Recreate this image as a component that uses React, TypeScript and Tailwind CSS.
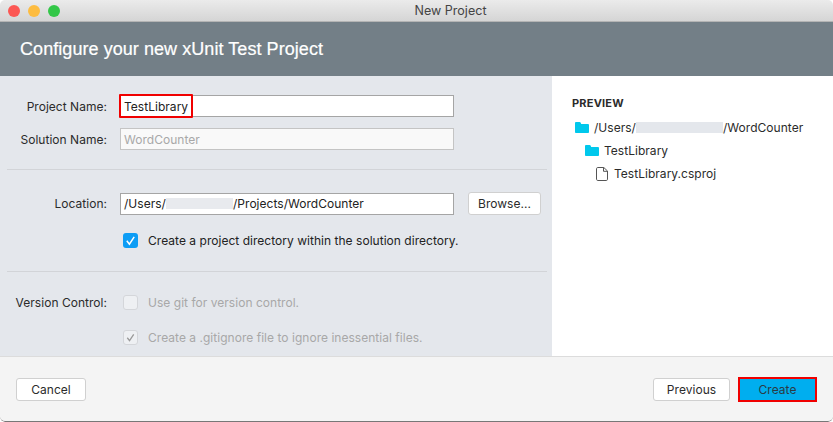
import type { ReactNode } from "react";

function FolderIcon() {
  return (
    <svg width="14" height="11" viewBox="0 0 14 11" className="shrink-0">
      <path d="M0 1.100C0 .5.5 0 1.100 0h3.500c.5 0 .8.200 1 .6L6.200 2h6.700c.6 0 1.100.5 1.100 1.100v6.800c0 .6-.5 1.100-1.100 1.100H1.100C.5 11 0 10.500 0 9.900z" fill="#00c8ec" />
    </svg>
  );
}

function FileIcon() {
  return (
    <svg width="12" height="14" viewBox="0 0 12 14" className="shrink-0">
      <path d="M1.800.5h6L11.500 4v8.300c0 .7-.5 1.200-1.200 1.200H1.800c-.7 0-1.300-.5-1.300-1.200V1.700C.5 1 1.100.5 1.800.5z" fill="white" stroke="#555" />
      <path d="M7.500.5v3.800h4" fill="none" stroke="#555" />
    </svg>
  );
}

function Check({ color }: { color: string }) {
  return (
    <svg width="15" height="15" viewBox="0 0 15 15">
      <path d="M3.800 7.800l2.600 3.400 4.800-7.400" fill="none" stroke={color} strokeWidth="1.500" />
    </svg>
  );
}

function Row({ label, children }: { label: string; children: ReactNode }) {
  return (
    <div className="flex items-center">
      <div className="w-[107px] shrink-0 text-right text-[#2b2b2b]">{label}</div>
      <div className="ml-[13px] flex min-w-0 flex-1 items-center">{children}</div>
    </div>
  );
}

function Button({ children, className }: { children: ReactNode; className: string }) {
  return (
    <button className={`h-[23px] rounded-[3px] border border-[#d0d0d0] bg-white text-[#2b2b2b] ${className}`}>
      {children}
    </button>
  );
}

export default function App() {
  return (
    <div className="flex h-[422px] w-[833px] flex-col overflow-hidden rounded-[5px] bg-white font-['Inter',sans-serif] text-[12px] leading-[15px] tracking-[0.03px]">
      {/* Title bar */}
      <div className="relative flex h-[22px] shrink-0 items-center justify-center border-b border-[#b4b4b4] bg-gradient-to-b from-[#ebebeb] to-[#d5d5d5] pl-[68px] text-[12.5px] text-[#444]">
        <div className="absolute top-[5px] left-[8px] flex gap-[8px]">
          <span className="h-[12px] w-[12px] rounded-full bg-[#fc5753]" />
          <span className="h-[12px] w-[12px] rounded-full bg-[#fdbc40]" />
          <span className="h-[12px] w-[12px] rounded-full bg-[#33c748]" />
        </div>
        New Project
      </div>

      {/* Header */}
      <div className="flex h-[54px] shrink-0 items-center bg-[#737f87] pl-[20px] font-['Liberation_Sans',sans-serif] text-[18px] tracking-[0.06px] text-white [-webkit-text-stroke:0.2px_white]">
        Configure your new xUnit Test Project
      </div>

      <div className="flex min-h-0 flex-1">
        {/* Form */}
        <div className="flex w-[552px] shrink-0 flex-col bg-[#e4e7ec] pt-[19px]">
          <div className="flex w-[454px] flex-col gap-[11px]">
            <Row label="Project Name:">
              <div className="relative flex h-[22px] w-full items-center border border-[#a5a5a5] bg-white pl-[3px] text-[#222]">
                TestLibrary
                <div className="absolute top-[-2px] left-[-2px] h-[24px] w-[74px] rounded-[1px] border-2 border-[#f00000]" />
              </div>
            </Row>
            <Row label="Solution Name:">
              <div className="flex h-[22px] w-full items-center border border-[#c4c4c4] bg-[#f9f9f9] pt-px pl-[3px] text-[#a8a8a8]">
                WordCounter
              </div>
            </Row>
          </div>

          <div className="mx-[7px] mt-[19px] h-px w-[540px] bg-[#d2d4d8]" />

          <div className="mt-[22px] flex items-center">
            <div className="w-[454px] shrink-0">
              <Row label="Location:">
                <div className="flex h-[22px] w-full items-center border border-[#a5a5a5] bg-white pl-[3px] text-[#222]">
                  /Users/
                  <span className="h-[11px] w-[67px] bg-[#e8eaee]" />
                  /Projects/WordCounter
                </div>
              </Row>
            </div>
            <Button className="ml-[14px] w-[73px]">Browse...</Button>
          </div>

          <div className="mt-[18px] ml-[123px] flex items-center gap-[10px] text-[#222]">
            <span className="flex h-[15px] w-[15px] items-center justify-center rounded-[3px] bg-[#0d9df5]">
              <Check color="white" />
            </span>
            Create a project directory within the solution directory.
          </div>

          <div className="mx-[7px] mt-[23px] h-px w-[540px] bg-[#d2d4d8]" />

          <div className="mt-[23px]">
            <Row label="Version Control:">
              <div className="ml-[3px] flex items-center gap-[10px] text-[#a8a8a8]">
                <span className="h-[15px] w-[15px] rounded-[3px] border border-[#d4d6da] bg-[#eef0f3]" />
                Use git for version control.
              </div>
            </Row>
          </div>

          <div className="mt-[20px] ml-[123px] flex items-center gap-[10px] text-[#a8a8a8]">
            <span className="flex h-[15px] w-[15px] items-center justify-center rounded-[3px] border border-[#d4d6da] bg-[#eef0f3]">
              <Check color="#9a9a9a" />
            </span>
            Create a .gitignore file to ignore inessential files.
          </div>
        </div>

        {/* Preview */}
        <div className="flex-1 bg-white pt-[20px] pl-[20px] text-[#2b2b2b]">
          <div className="text-[11px] font-bold tracking-[0.2px]">PREVIEW</div>
          <div className="mt-[9px] flex flex-col gap-[8px]">
            <div className="ml-[3px] flex h-[15px] items-center gap-[5px]">
              <FolderIcon />
              <span className="flex items-center">
                /Users/
                <span className="h-[11px] w-[87px] bg-[#e4e7ec]" />
                /WordCounter
              </span>
            </div>
            <div className="ml-[13px] flex h-[15px] items-center gap-[5px]">
              <FolderIcon />
              TestLibrary
            </div>
            <div className="ml-[24px] flex h-[15px] items-center gap-[6px]">
              <FileIcon />
              TestLibrary.csproj
            </div>
          </div>
        </div>
      </div>

      {/* Footer */}
      <div className="flex h-[66px] shrink-0 items-center justify-between rounded-b-[5px] border-t border-b border-t-[#dcdcdc] border-b-[#777] bg-[#f4f4f4] px-[16px] pt-px">
        <Button className="w-[70px]">Cancel</Button>
        <div className="flex items-center gap-[8px]">
          <Button className="w-[77px]">Previous</Button>
          <button className="h-[25px] w-[79px] border-2 border-[#f00000] bg-[#00aeef] text-[#2b3a45]">Create</button>
        </div>
      </div>
    </div>
  );
}
